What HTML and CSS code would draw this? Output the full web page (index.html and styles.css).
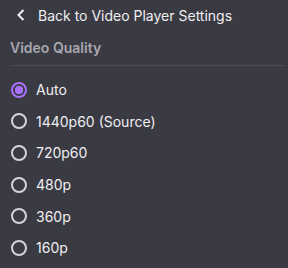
FILE: index.html
```html
<!DOCTYPE html>
<html lang="en">
<head>
    <meta charset="UTF-8">
    <title>Video Quality</title>
    <link rel="stylesheet" href="styles.css">
</head>
<body>
    <div class="menu">
        <button class="back-btn">
            <svg class="chevron" width="10" height="12" viewBox="0 0 10 12">
                <path d="M7.5 1 L2.5 6 L7.5 11" fill="none" stroke="#efeff1" stroke-width="2"/>
            </svg>
            <span>Back to Video Player Settings</span>
        </button>
        <div class="menu-title">Video Quality</div>
        <div class="divider"></div>
        <div class="options">
            <label class="option"><input type="radio" name="quality" checked><span>Auto</span></label>
            <label class="option"><input type="radio" name="quality"><span>1440p60 (Source)</span></label>
            <label class="option"><input type="radio" name="quality"><span>720p60</span></label>
            <label class="option"><input type="radio" name="quality"><span>480p</span></label>
            <label class="option"><input type="radio" name="quality"><span>360p</span></label>
            <label class="option"><input type="radio" name="quality"><span>160p</span></label>
        </div>
    </div>
</body>
</html>
```

FILE: styles.css
```css
body {
    margin: 0;
    background-color: #3a3a43;
    font-family: Inter, "Liberation Sans", sans-serif;
    color: #efeff1;
}
.menu {
    padding: 4px 2px 0 10px;
}
.back-btn {
    display: flex;
    align-items: center;
    gap: 12px;
    background: none;
    border: none;
    padding: 0 0 0 6px;
    height: 22px;
    color: #efeff1;
    font-family: inherit;
    font-size: 14px;
}
.menu-title {
    margin-top: 12px;
    height: 20px;
    line-height: 20px;
    font-size: 14px;
    font-weight: 600;
    color: #a6a6b0;
}
.divider {
    margin-top: 7px;
    height: 1px;
    background-color: #4b4b55;
}
.options {
    padding-top: 8px;
}
.option {
    display: flex;
    align-items: center;
    gap: 9px;
    height: 31.6px;
    font-size: 14px;
}
.option input {
    appearance: none;
    margin: 0 0 0 1px;
    width: 16px;
    height: 16px;
    border: 2px solid #d3d3d9;
    border-radius: 50%;
    box-sizing: border-box;
}
.option input:checked {
    border-color: #a970ff;
    background: radial-gradient(circle, #a970ff 4px, #3a3a43 4.5px);
}
```
